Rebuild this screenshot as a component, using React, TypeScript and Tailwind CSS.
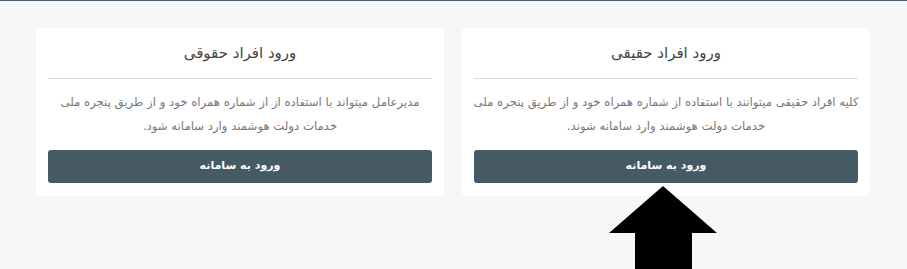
import React from "react";

const cards = [
  {
    id: "real",
    title: "ورود افراد حقیقی",
    text: "کلیه افراد حقیقی میتوانند با استفاده از شماره همراه خود و از طریق پنجره ملی خدمات دولت هوشمند وارد سامانه شوند.",
  },
  {
    id: "legal",
    title: "ورود افراد حقوقی",
    text: "مدیرعامل میتواند با استفاده از از شماره همراه خود و از طریق پنجره ملی خدمات دولت هوشمند وارد سامانه شود.",
  },
];

export default function App() {
  return (
    <div
      dir="rtl"
      className="relative min-h-[269px] w-full overflow-hidden bg-[#f7f7f9] border-t border-[#455a64]"
      style={{ fontFamily: '"DejaVu Sans", "Noto Sans", sans-serif' }}
    >
      <div className="grid grid-cols-2 gap-[18px] pr-[37px] pl-[36px] pt-[27px]">
        {cards.map((card) => (
          <div key={card.id} className="bg-white rounded px-3 pb-[13px] flex flex-col">
            <div className="h-[50px] flex items-center justify-center text-[15px] text-[#444]">
              {card.title}
            </div>
            <div className="h-px bg-[#dedede]" />
            <p className="mt-[11px] mb-[12px] -mx-1 text-center text-[11.7px] leading-6 text-[#777]">
              {card.text}
            </p>
            <button className="h-[33px] w-full rounded-[3px] bg-[#465a65] text-white text-[11px] font-bold">
              ورود به سامانه
            </button>
          </div>
        ))}
      </div>

      {/* arrow pointing at the button */}
      <svg
        className="absolute left-[609px] top-[185px]"
        width="109"
        height="84"
        viewBox="0 0 109 84"
      >
        <polygon points="54,0 108,47 83,47 83,84 26,84 26,47 0,47" fill="#000" />
      </svg>
    </div>
  );
}
